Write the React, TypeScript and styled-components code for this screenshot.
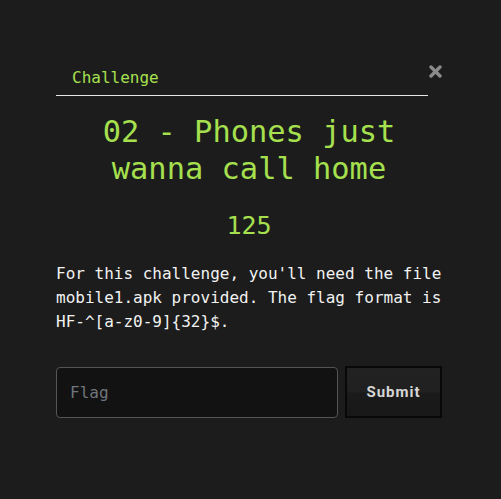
import React from "react";
import styled, { createGlobalStyle } from "styled-components";

const Global = createGlobalStyle`
  html, body { margin: 0; padding: 0; background: #1c1c1c; }
  body { font-family: "DejaVu Sans Mono", monospace; }
`;

const Page = styled.div`
  width: 501px;
  height: 499px;
  background: #1c1c1c;
  padding: 56px 59px 0 56px;
  box-sizing: border-box;
`;

const Modal = styled.div`
  display: flex;
  flex-direction: column;
  width: 386px;
`;

const Header = styled.div`
  display: flex;
  align-items: flex-start;
  justify-content: space-between;
`;

const HeaderTab = styled.div`
  flex: 1;
  padding: 11px 16px 6px;
  border-bottom: 1px solid #e6e6e6;
  color: #a6e04e;
  font-size: 16px;
  line-height: 22px;
`;

const Close = styled.button`
  display: flex;
  background: none;
  border: none;
  padding: 0;
  margin: 9px 0 0 1px;
  width: 13px;
  height: 13px;
  cursor: pointer;
`;

const Title = styled.h1`
  margin: 17px 0 0;
  text-align: center;
  color: #a6e04e;
  font-family: "DejaVu Sans Mono", monospace;
  font-weight: normal;
  font-size: 30.4px;
  line-height: 37px;
`;

const Points = styled.div`
  margin-top: 24px;
  text-align: center;
  color: #a6e04e;
  font-size: 25px;
  line-height: 30px;
`;

const Desc = styled.p`
  margin: 21px 0 0;
  color: #f2f2f2;
  font-size: 16px;
  line-height: 24px;
  white-space: pre-line;
`;

const Form = styled.form`
  display: flex;
  gap: 7px;
  margin-top: 33px;
`;

const Input = styled.input`
  width: 282px;
  height: 51px;
  box-sizing: border-box;
  background: #121212;
  border: 1px solid #555;
  border-radius: 4px;
  padding: 0 13px;
  color: #ddd;
  font-family: "DejaVu Sans Mono", monospace;
  font-size: 16px;
  outline: none;
  &::placeholder { color: #6f757c; }
`;

const Button = styled.button`
  width: 97px;
  height: 52px;
  margin-top: -1px;
  box-sizing: border-box;
  border: 2px solid #080808;
  background: linear-gradient(#222 0%, #202020 50%, #1a1a1a 52%, #181818 100%);
  color: #d6d6d6;
  font-family: Roboto, "Liberation Sans", sans-serif;
  font-weight: bold;
  font-size: 15px;
  letter-spacing: 1px;
  cursor: pointer;
`;

export default function App() {
  return (
    <>
      <Global />
      <Page>
        <Modal>
          <Header>
            <HeaderTab>Challenge</HeaderTab>
            <Close aria-label="close">
              <svg width="13" height="13" viewBox="0 0 13 13">
                <path d="M2 2 L11 11 M11 2 L2 11" stroke="#8a8a8a" strokeWidth="3.4" strokeLinecap="round" />
              </svg>
            </Close>
          </Header>
          <Title>02 - Phones just<br />wanna call home</Title>
          <Points>125</Points>
          <Desc>
            {"For this challenge, you'll need the file\nmobile1.apk provided. The flag format is\nHF-^[a-z0-9]{32}$."}
          </Desc>
          <Form onSubmit={(e) => e.preventDefault()}>
            <Input placeholder="Flag" />
            <Button type="submit">Submit</Button>
          </Form>
        </Modal>
      </Page>
    </>
  );
}
